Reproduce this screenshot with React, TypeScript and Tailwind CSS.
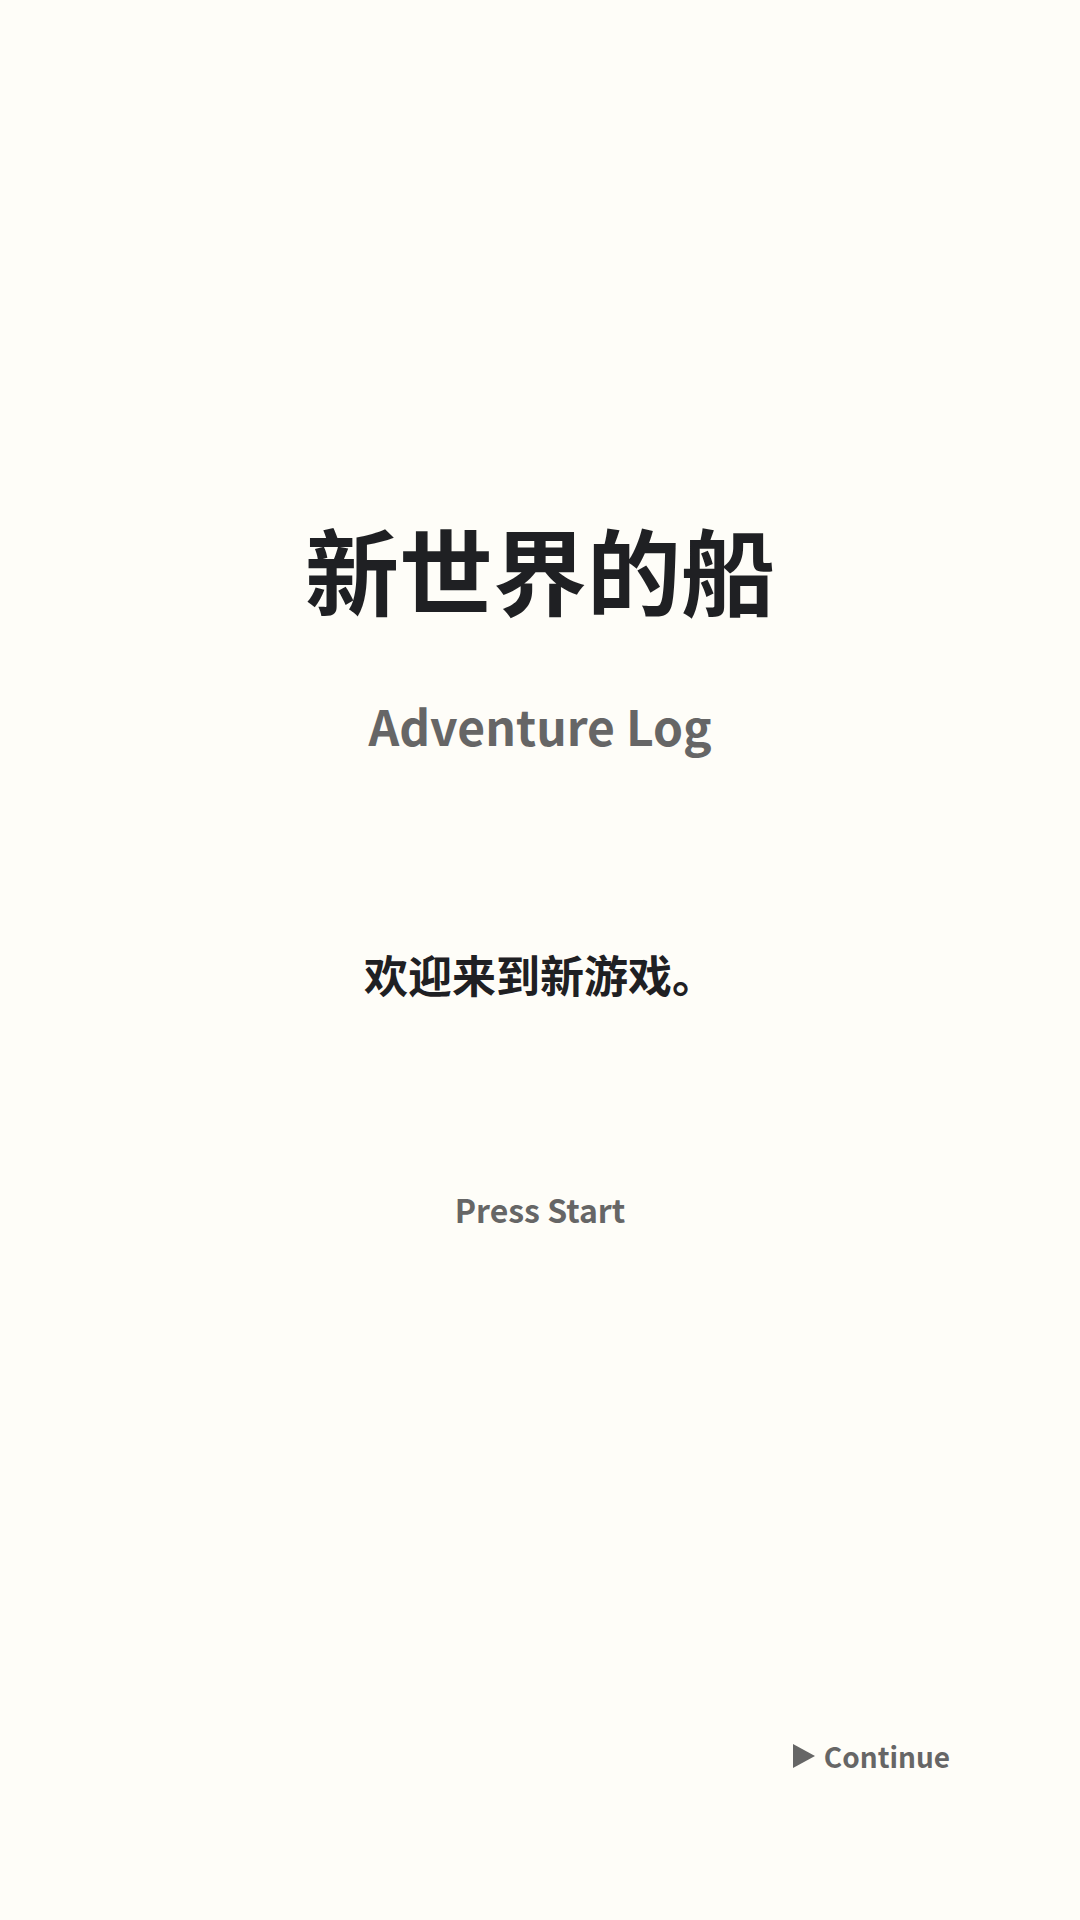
import React from "react";

export default function App() {
  const font = { fontFamily: '"Noto Sans CJK SC", "Noto Sans", sans-serif' };
  return (
    <div
      className="w-[1080px] h-[1920px] bg-[#fefdf8] flex flex-col items-center pt-[521px] font-bold"
      style={font}
    >
      <h1 className="text-[94px] leading-none text-[#1f2023] font-bold">新世界的船</h1>
      <div className="mt-[86px] text-[48px] leading-none text-[#666666]">Adventure Log</div>
      <p className="mt-[203px] text-[44px] leading-none text-[#1f2023]">欢迎来到新游戏。</p>
      <div className="mt-[197px] text-[32px] leading-none text-[#666666]">Press Start</div>
      <div className="mt-[517px] self-end pr-[130px] flex items-center gap-[9px] text-[28px] leading-none text-[#666666]">
        <svg width="22" height="24" viewBox="0 0 22 24" className="shrink-0">
          <polygon points="0,0 22,12 0,24" fill="#666666" />
        </svg>
        <span>Continue</span>
      </div>
    </div>
  );
}
